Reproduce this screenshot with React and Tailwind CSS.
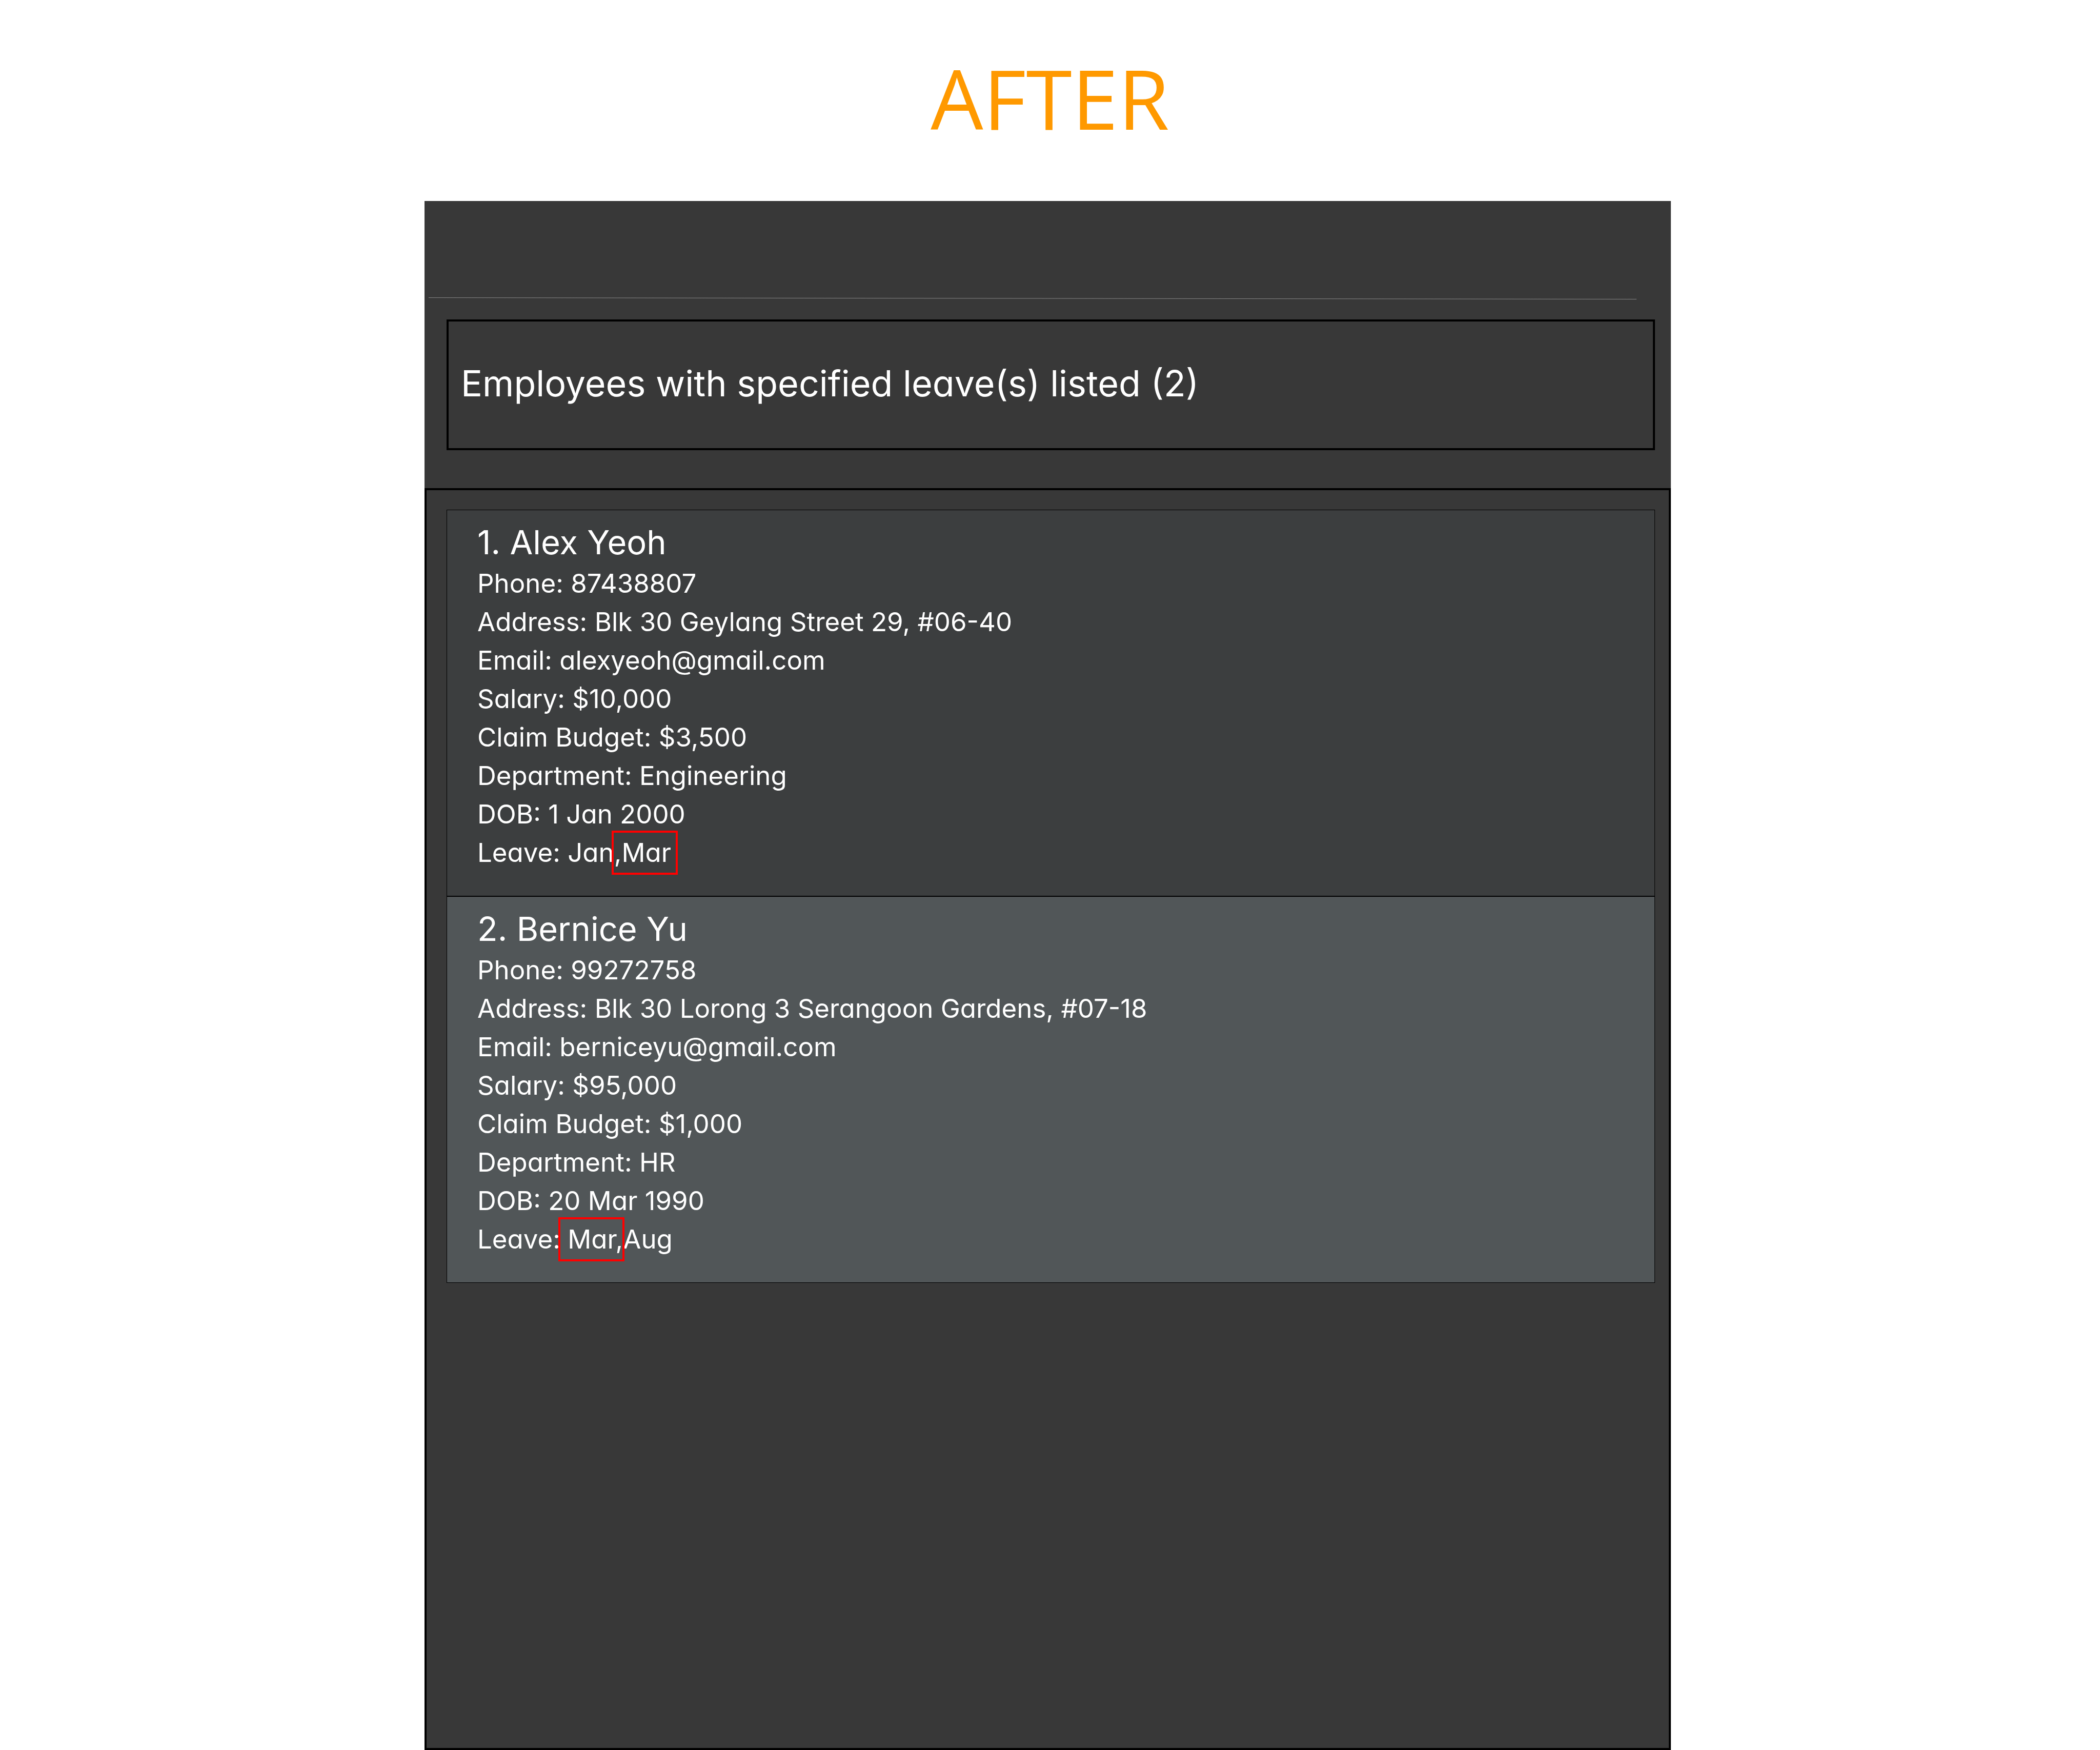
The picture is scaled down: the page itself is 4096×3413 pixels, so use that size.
const employees = [
  {
    name: "Alex Yeoh",
    background: "bg-[#3c3e3f]",
    marker: "left-[262px]",
    fields: [
      ["Phone", "87438807"],
      ["Address", "Blk 30 Geylang Street 29, #06-40"],
      ["Email", "alexyeoh@gmail.com"],
      ["Salary", "$10,000"],
      ["Claim Budget", "$3,500"],
      ["Department", "Engineering"],
      ["DOB", "1 Jan 2000"],
      ["Leave", "Jan,Mar"],
    ],
  },
  {
    name: "Bernice Yu",
    background: "bg-[#515658]",
    marker: "left-[158px]",
    fields: [
      ["Phone", "99272758"],
      ["Address", "Blk 30 Lorong 3 Serangoon Gardens, #07-18"],
      ["Email", "berniceyu@gmail.com"],
      ["Salary", "$95,000"],
      ["Claim Budget", "$1,000"],
      ["Department", "HR"],
      ["DOB", "20 Mar 1990"],
      ["Leave", "Mar,Aug"],
    ],
  },
];

function Divider() {
  return (
    <svg
      className="ml-2 mr-[67px] block h-1 w-auto self-stretch"
      viewBox="0 0 2356 4"
      preserveAspectRatio="none"
      aria-hidden="true"
    >
      <line x1="0" y1="0.5" x2="2356" y2="3.5" stroke="#868686" strokeWidth="1" />
    </svg>
  );
}

function EmployeeCard({ index, employee }) {
  return (
    <li className={`border border-black pb-[47px] pl-[59px] pt-[21px] ${employee.background}`}>
      <h2 className="text-[65px] leading-[84px]">
        {index}. {employee.name}
      </h2>
      <ul className="text-[51px] leading-[75px]">
        {employee.fields.map(([label, value]) => (
          <li key={label} className="relative">
            {label}: {value}
            {label === "Leave" && (
              <span
                className={`absolute -top-[5px] h-[86px] w-[129px] border-4 border-[#ff0000] ${employee.marker}`}
              />
            )}
          </li>
        ))}
      </ul>
    </li>
  );
}

export default function App() {
  return (
    <div className="flex min-h-screen flex-col bg-white font-['Inter',sans-serif] text-white [font-feature-settings:'cv11']">
      <h1 className="pb-[11px] text-center font-['Open_Sans',sans-serif] text-[162px] leading-[381px] text-[#ff9900]">
        AFTER
      </h1>
      <main className="ml-[828px] mr-[837px] flex flex-1 flex-col bg-[#383838]">
        <div className="flex flex-col pt-[188px]">
          <Divider />
        </div>
        <p
          role="status"
          className="mb-[74px] ml-[43px] mr-[31px] mt-[39px] border-4 border-black pb-[84px] pl-6 pt-[78px] text-[70px] leading-[85px]"
        >
          Employees with specified leave(s) listed (2)
        </p>
        <ol className="flex-1 border-4 border-black pl-[39px] pr-[27px] pt-[38px]">
          {employees.map((employee, i) => (
            <EmployeeCard key={employee.name} index={i + 1} employee={employee} />
          ))}
        </ol>
      </main>
    </div>
  );
}
